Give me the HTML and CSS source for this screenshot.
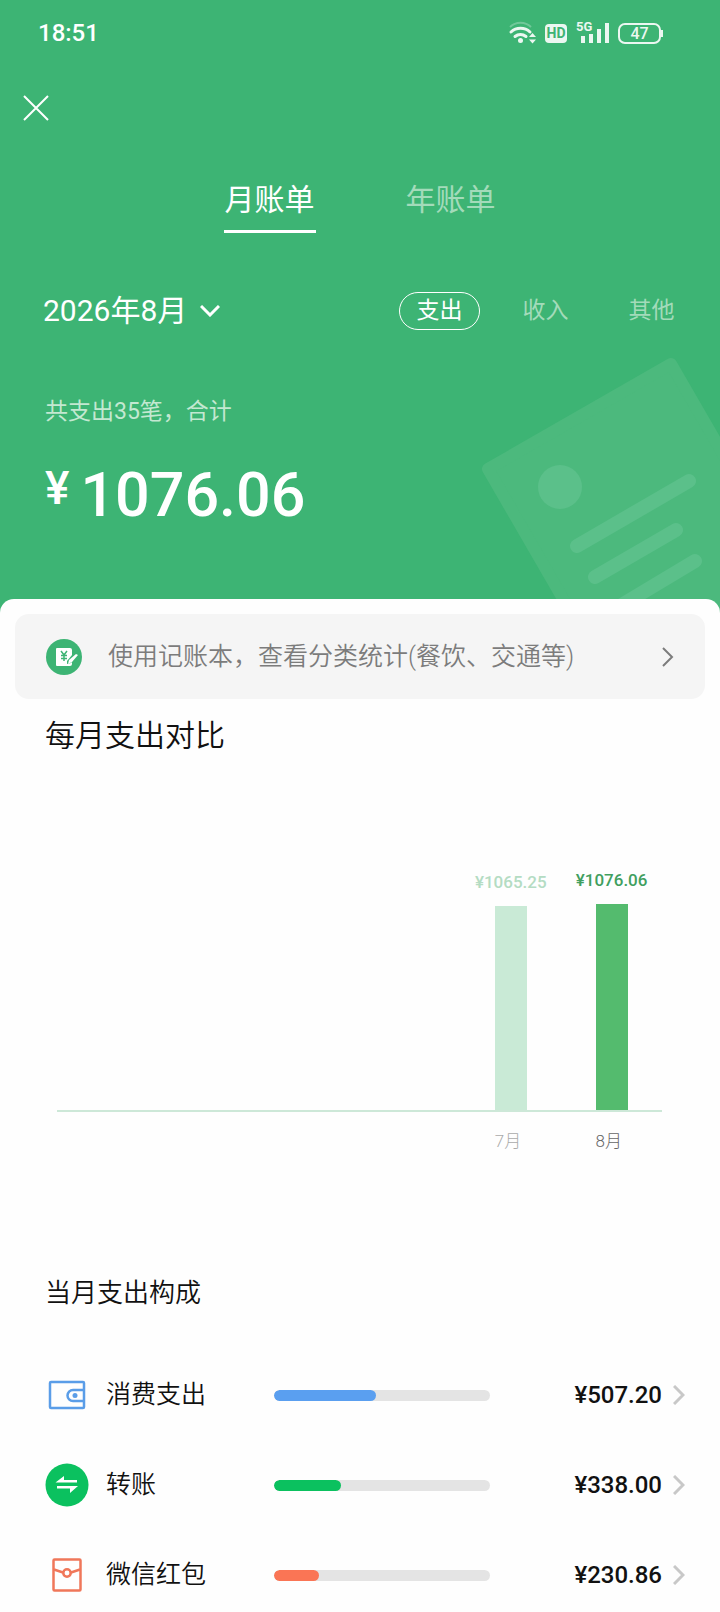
FILE: index.html
```html
<!DOCTYPE html>
<html lang="zh-CN">
<head>
<meta charset="utf-8">
<meta name="viewport" content="width=device-width, initial-scale=1">
<title>月账单</title>
<link rel="stylesheet" href="styles.css">
</head>
<body>
<header class="hero">
  <svg class="hero-art" viewBox="0 0 250 262" aria-hidden="true">
    <path class="art-paper" d="M18 118 L201 13 L330 236 L147 341 Z"/>
    <circle class="art-mark" cx="90" cy="136" r="22"/>
    <path class="art-lines" d="M107 195 L219 130 M125 226 L206 179 M130 267 L225 210"/>
  </svg>

  <div class="status">
    <span class="clock">18:51</span>
    <div class="status-icons">
      <svg class="wifi" viewBox="0 0 28 24" aria-hidden="true">
        <path d="M2 6 A15 15 0 0 1 23 6" fill="none" stroke="#fff" stroke-width="2" opacity=".3"/>
        <path d="M3 11 A14 14 0 0 1 22 11 M7 15.500 A8.500 8.500 0 0 1 18 15.500" fill="none" stroke="#fff" stroke-width="3" stroke-linecap="round"/>
        <circle cx="12.500" cy="19.500" r="2.500" fill="#fff"/>
        <path d="M21 16 L24.500 12 L28 16 Z M21 18.500 L24.500 22.500 L28 18.500 Z" fill="#fff"/>
      </svg>
      <span class="hd">HD</span>
      <div class="signal">
        <svg viewBox="0 0 30 22" aria-hidden="true">
          <path d="M4 14v7 M12 12v9 M20 7v14 M28 1v20" fill="none" stroke="#fff" stroke-width="4"/>
        </svg>
        <span class="network">5G</span>
      </div>
      <span class="battery">47</span>
    </div>
  </div>

  <div class="toolbar">
    <button class="close" type="button" aria-label="关闭">
      <svg viewBox="0 0 26 26" aria-hidden="true"><path d="M1 1 L25 25 M25 1 L1 25" fill="none" stroke="#fff" stroke-width="2"/></svg>
    </button>
  </div>

  <nav class="tabs">
    <button class="tab tab-active" type="button">月账单</button>
    <button class="tab" type="button">年账单</button>
  </nav>

  <div class="filters">
    <button class="month" type="button">2026年8月
      <svg class="month-arrow" viewBox="0 0 20 12" aria-hidden="true"><path d="M1 1 L10 10 L19 1" fill="none" stroke="#fff" stroke-width="3"/></svg>
    </button>
    <div class="kinds">
      <button class="kind kind-active" type="button">支出</button>
      <button class="kind" type="button">收入</button>
      <button class="kind" type="button">其他</button>
    </div>
  </div>

  <p class="summary">共支出35笔，合计</p>
  <p class="total"><span class="total-sign">¥</span><span class="total-value">1076.06</span></p>
</header>

<main class="sheet">
  <a class="banner" href="#">
    <svg class="banner-icon" viewBox="0 0 36 36" aria-hidden="true">
      <circle cx="18" cy="18" r="18" fill="#3db474"/>
      <path d="M11 9h13a2 2 0 0 1 2 2v5l-5 6v3l4-1 1-1v2a2 2 0 0 1-2 2H11a1 1 0 0 1-1-1V10a1 1 0 0 1 1-1z" fill="#fff"/>
      <path d="M15 12l3 4 3-4 M18 16v6 M15 16.500h6 M15 19.500h6" fill="none" stroke="#3db474" stroke-width="1.500"/>
      <path d="M22 25l1-4 7-6 2 1-6 7z" fill="#fff"/>
    </svg>
    <span class="banner-text">使用记账本，查看分类统计(餐饮、交通等)</span>
    <svg class="arrow arrow-dark" viewBox="0 0 12 20" aria-hidden="true"><path d="M1 1 L10 10 L1 19"/></svg>
  </a>

  <section class="compare">
    <h2 class="title-large">每月支出对比</h2>
    <div class="chart">
      <div class="plot">
        <div class="column">
          <span class="column-value">¥1065.25</span>
          <div class="column-bar" style="height:204px"></div>
        </div>
        <div class="column column-current">
          <span class="column-value">¥1076.06</span>
          <div class="column-bar" style="height:206px"></div>
        </div>
      </div>
      <div class="months">
        <div class="month-cell"><span class="month-name">7月</span></div>
        <div class="month-cell month-cell-current"><span class="month-name">8月</span></div>
      </div>
    </div>
  </section>

  <section class="makeup">
    <h2 class="title-small">当月支出构成</h2>
    <a class="row" href="#">
      <svg class="row-icon" viewBox="0 0 44 44" aria-hidden="true">
        <g fill="none" stroke="#5a9de8" stroke-width="2.500">
          <rect x="5" y="9" width="34" height="26" rx="1"/>
          <path d="M39 17H28a5.500 5.500 0 0 0 0 11h11"/>
        </g>
        <circle cx="30" cy="22.500" r="2.500" fill="#5a9de8"/>
      </svg>
      <span class="row-name">消费支出</span>
      <div class="meter"><div class="fill fill-blue" style="width:47%"></div></div>
      <span class="row-amount">¥507.20</span>
      <svg class="arrow" viewBox="0 0 12 20" aria-hidden="true"><path d="M1 1 L10 10 L1 19"/></svg>
    </a>
    <a class="row" href="#">
      <svg class="row-icon" viewBox="0 0 44 44" aria-hidden="true">
        <circle cx="22" cy="22" r="21.500" fill="#0bc15f"/>
        <path d="M10.500 19.500 L19 13 V17 H32 V19.500 Z M33 23 H12 V25.500 H25 V30 Z" fill="#fff"/>
      </svg>
      <span class="row-name">转账</span>
      <div class="meter"><div class="fill fill-green" style="width:31%"></div></div>
      <span class="row-amount">¥338.00</span>
      <svg class="arrow" viewBox="0 0 12 20" aria-hidden="true"><path d="M1 1 L10 10 L1 19"/></svg>
    </a>
    <a class="row" href="#">
      <svg class="row-icon" viewBox="0 0 44 44" aria-hidden="true">
        <g fill="none" stroke="#f0775a" stroke-width="2.500">
          <rect x="8.500" y="6.500" width="27" height="31" rx="1"/>
          <path d="M9 16.500l9 3 M35 16.500l-9 3"/>
          <circle cx="22" cy="20" r="3.700"/>
        </g>
      </svg>
      <span class="row-name">微信红包</span>
      <div class="meter"><div class="fill fill-red" style="width:21%"></div></div>
      <span class="row-amount">¥230.86</span>
      <svg class="arrow" viewBox="0 0 12 20" aria-hidden="true"><path d="M1 1 L10 10 L1 19"/></svg>
    </a>
  </section>
</main>
</body>
</html>
```
FILE: styles.css
```css
* {
  box-sizing: border-box;
}

body {
  margin: 0;
  background: #fefefe;
  color: #111;
  font-family: Roboto, "Noto Sans CJK SC", sans-serif;
}

button {
  margin: 0;
  padding: 0;
  border: 0;
  background: none;
  color: inherit;
  font: inherit;
}

a {
  color: inherit;
  text-decoration: none;
}

h2,
p {
  margin: 0;
  font-weight: 400;
}

svg {
  display: block;
}

.hero {
  position: relative;
  overflow: hidden;
  padding-bottom: 82px;
  background: #3db474;
  color: #fff;
}

.hero-art {
  position: absolute;
  right: 0;
  bottom: 0;
  width: 250px;
  height: 262px;
}

.art-paper {
  fill: #4cb97d;
  stroke: #4cb97d;
  stroke-width: 12;
  stroke-linejoin: round;
}

.art-mark {
  fill: #5bc08a;
}

.art-lines {
  fill: none;
  stroke: #5bc08a;
  stroke-width: 14;
  stroke-linecap: round;
}

.status {
  display: flex;
  align-items: center;
  justify-content: space-between;
  height: 66px;
  padding: 0 59px 0 38px;
}

.clock {
  font-size: 24px;
  font-weight: 500;
}

.status-icons {
  display: flex;
  align-items: center;
  gap: 9px;
  opacity: 0.9;
}

.wifi {
  width: 28px;
  height: 24px;
}

.hd {
  width: 22px;
  border-radius: 4px;
  background: #fff;
  color: #3db474;
  font-size: 14px;
  font-weight: 700;
  line-height: 19px;
  text-align: center;
}

.signal {
  position: relative;
  width: 30px;
  margin-left: 3px;
}

.signal svg {
  width: 30px;
  height: 22px;
}

.network {
  position: absolute;
  top: -2px;
  left: -3px;
  padding-right: 1px;
  background: #3db474;
  font-size: 13px;
  font-weight: 700;
  line-height: 13px;
}

.battery {
  position: relative;
  width: 43px;
  border: 2px solid #fff;
  border-radius: 7px;
  font-size: 16px;
  font-weight: 500;
  line-height: 17px;
  text-align: center;
}

.battery::after {
  content: "";
  position: absolute;
  top: 5px;
  right: -4px;
  width: 2px;
  height: 7px;
  background: #fff;
}

.toolbar {
  display: flex;
  align-items: center;
  height: 84px;
  padding: 0 23px;
}

.close svg {
  width: 26px;
  height: 26px;
}

.tabs {
  display: flex;
  justify-content: center;
  gap: 89px;
  padding-top: 26px;
}

.tab {
  padding: 0 1px 6px;
  border-bottom: 3px solid transparent;
  color: #a3dbba;
  font-size: 30px;
  line-height: 48px;
}

.tab-active {
  border-color: #fff;
  color: #fff;
}

.filters {
  display: flex;
  align-items: center;
  justify-content: space-between;
  margin-top: 59px;
  padding: 0 28px 0 43px;
}

.month {
  display: flex;
  align-items: center;
  gap: 13px;
  font-size: 30px;
  line-height: 38px;
}

.month-arrow {
  width: 20px;
  height: 12px;
}

.kinds {
  display: flex;
  gap: 25px;
}

.kind {
  width: 81px;
  border: 1px solid transparent;
  border-radius: 20px;
  color: #a3dbba;
  font-size: 23px;
  line-height: 36px;
}

.kind-active {
  border-color: #fff;
  color: #fff;
}

.summary {
  margin-top: 66px;
  padding-left: 45px;
  color: #c3e8d1;
  font-size: 23px;
  line-height: 32px;
}

.total {
  display: flex;
  align-items: flex-start;
  gap: 11px;
  margin-top: 31px;
  padding-left: 45px;
  font-weight: 500;
}

.total-sign {
  font-size: 46px;
  line-height: 58px;
}

.total-value {
  font-size: 61px;
  line-height: 72px;
}

.sheet {
  position: relative;
  margin-top: -14px;
  padding: 15px;
  border-radius: 14px 14px 0 0;
  background: #fefefe;
}

.banner {
  display: flex;
  align-items: center;
  padding: 24px 31px;
  border-radius: 14px;
  background: #f5f5f5;
  color: #7c7c7c;
}

.banner-icon {
  width: 36px;
  height: 36px;
}

.banner-text {
  flex: 1;
  margin-left: 26px;
  font-size: 25px;
  font-weight: 350;
  line-height: 37px;
}

.arrow {
  flex: none;
  width: 12px;
  height: 20px;
  fill: none;
  stroke: #c8c8c8;
  stroke-width: 3;
}

.arrow-dark {
  stroke: #7c7c7c;
  stroke-width: 2;
}

.compare {
  padding: 17px 43px 0 30px;
}

.title-large {
  font-size: 30px;
  font-weight: 350;
  line-height: 40px;
}

.chart {
  margin: 114px 0 0 12px;
}

.plot {
  display: flex;
  justify-content: flex-end;
  align-items: flex-end;
  height: 242px;
  border-bottom: 2px solid #cde8d8;
}

.column {
  display: flex;
  flex-direction: column;
  align-items: center;
  width: calc(100% / 6);
  color: #b4dcc3;
}

.column-value {
  font-size: 17px;
  font-weight: 500;
  line-height: 20px;
  margin-bottom: 14px;
}

.column-bar {
  width: 32px;
  background: #c9ead6;
}

.column-current {
  color: #419f5f;
}

.column-current .column-bar {
  background: #54bb6e;
}

.months {
  display: flex;
  justify-content: flex-end;
  padding-top: 16px;
}

.month-cell {
  display: flex;
  justify-content: center;
  width: calc(100% / 6);
  color: #aaa;
  font-size: 17px;
  font-weight: 300;
  line-height: 26px;
}

.month-name {
  width: 32px;
}

.month-cell-current {
  color: #666;
}

.makeup {
  padding: 119px 20px 0 30px;
}

.title-small {
  margin-bottom: 37px;
  font-size: 26px;
  font-weight: 350;
  line-height: 40px;
}

.row {
  display: grid;
  grid-template-columns: 44px 185px 1fr 183px 12px;
  align-items: center;
  height: 90px;
}

.row-icon {
  width: 44px;
  height: 44px;
}

.row-name {
  padding-left: 17px;
  font-size: 25px;
  font-weight: 350;
  line-height: 36px;
}

.row-amount {
  padding-right: 11px;
  font-size: 24px;
  font-weight: 500;
  line-height: 36px;
  text-align: right;
}

.meter {
  overflow: hidden;
  height: 11px;
  border-radius: 6px;
  background: #e4e4e4;
}

.fill {
  height: 100%;
  border-radius: 6px;
}

.fill-blue {
  background: #5a9ff0;
}

.fill-green {
  background: #0bc15f;
}

.fill-red {
  background: #fa7555;
}
```
